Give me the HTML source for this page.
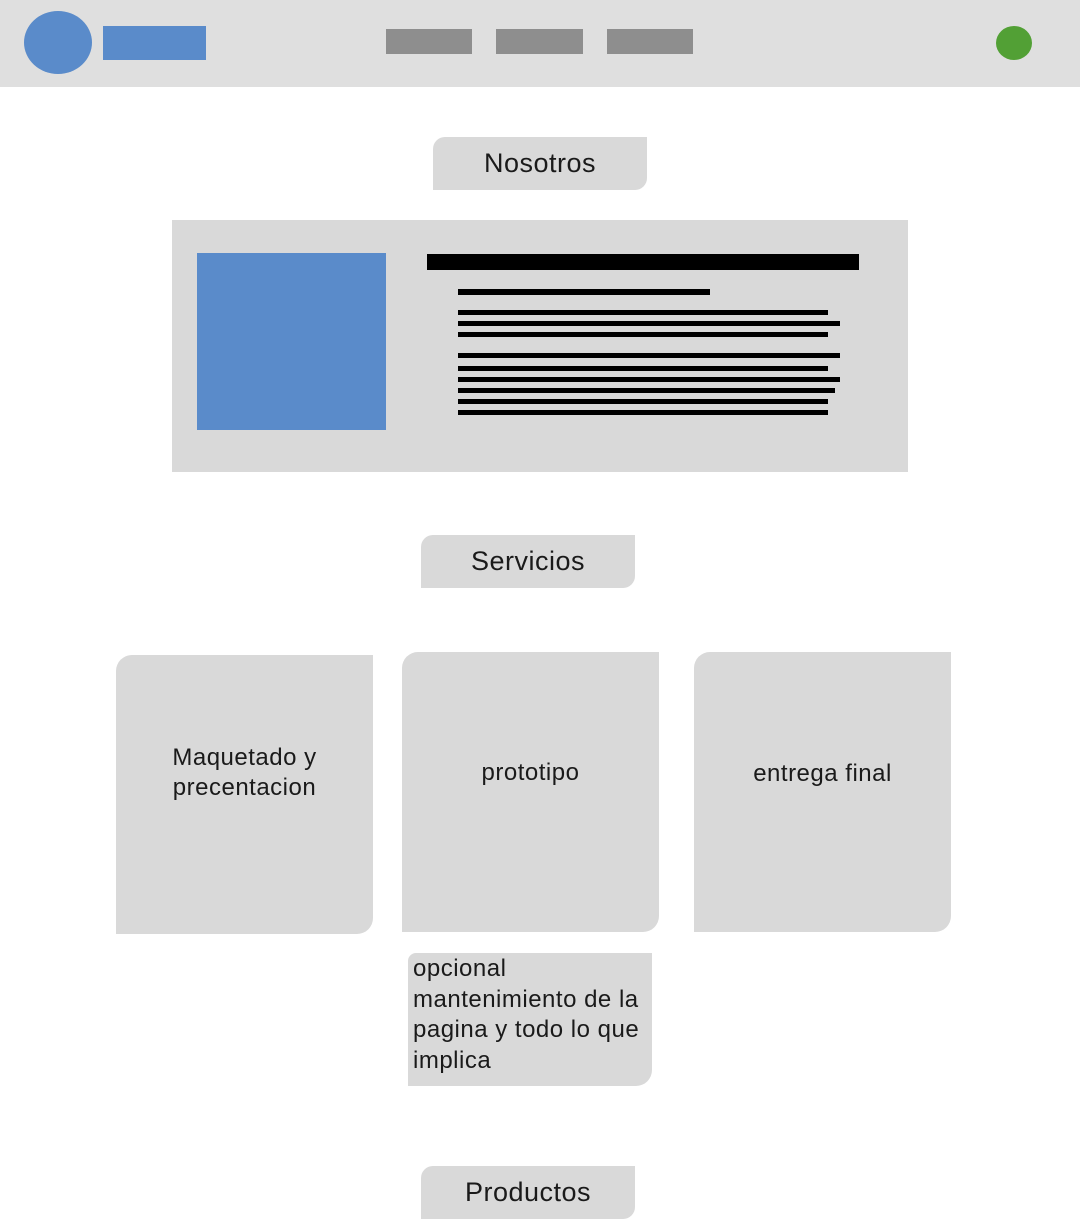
<!DOCTYPE html>
<html><head><meta charset="utf-8"><style>
body{margin:0;width:1080px;height:1227px;background:#fff;position:relative;overflow:hidden;font-family:"Liberation Sans",sans-serif;color:#1a1a1a}
.a{position:absolute}
.g{background:#d9d9d9}
.pill{position:absolute;background:#d9d9d9;border-radius:12px 0 12px 0;font-size:27px;display:flex;align-items:center;justify-content:center;letter-spacing:0.5px}
.card{position:absolute;background:#d9d9d9;border-radius:16px 0 16px 0;font-size:24px;text-align:center;line-height:30px;letter-spacing:0.5px}
.l{position:absolute;background:#000;height:5px}
</style></head><body>
<div class="a" style="left:0;top:0;width:1080px;height:87px;background:#dfdfdf"></div>
<div class="a" style="left:24px;top:11px;width:68px;height:63px;border-radius:50%;background:#5a8bca"></div>
<div class="a" style="left:103px;top:26px;width:103px;height:34px;background:#5a8bca"></div>
<div class="a" style="left:386px;top:29px;width:86px;height:25px;background:#8e8e8e"></div>
<div class="a" style="left:496px;top:29px;width:87px;height:25px;background:#8e8e8e"></div>
<div class="a" style="left:607px;top:29px;width:86px;height:25px;background:#8e8e8e"></div>
<div class="a" style="left:996px;top:26px;width:36px;height:34px;border-radius:50%;background:#52a035"></div>

<div class="pill" style="left:433px;top:137px;width:214px;height:53px">Nosotros</div>
<div class="a g" style="left:172px;top:220px;width:736px;height:252px"></div>
<div class="a" style="left:197px;top:253px;width:189px;height:177px;background:#5a8bca"></div>
<div class="l" style="left:427px;top:254px;width:432px;height:16px"></div>
<div class="l" style="left:458px;top:289px;width:252px;height:6px"></div>
<div class="l" style="left:458px;top:310px;width:370px"></div>
<div class="l" style="left:458px;top:321px;width:382px"></div>
<div class="l" style="left:458px;top:332px;width:370px"></div>
<div class="l" style="left:458px;top:353px;width:382px"></div>
<div class="l" style="left:458px;top:366px;width:370px"></div>
<div class="l" style="left:458px;top:377px;width:382px"></div>
<div class="l" style="left:458px;top:388px;width:377px"></div>
<div class="l" style="left:458px;top:399px;width:370px"></div>
<div class="l" style="left:458px;top:410px;width:370px"></div>

<div class="pill" style="left:421px;top:535px;width:214px;height:53px">Servicios</div>
<div class="card" style="left:116px;top:655px;width:257px;height:279px"><div style="padding-top:88px">Maquetado y<br>precentacion</div></div>
<div class="card" style="left:402px;top:652px;width:257px;height:280px"><div style="padding-top:106px">prototipo</div></div>
<div class="card" style="left:694px;top:652px;width:257px;height:280px"><div style="padding-top:107px">entrega final</div></div>
<div class="card" style="left:408px;top:953px;width:244px;height:133px;text-align:left;line-height:30.5px;border-radius:8px 0 16px 0"><div style="padding:1px 0 0 5px">opcional<br>mantenimiento de la<br>pagina y todo lo que<br>implica</div></div>

<div class="pill" style="left:421px;top:1166px;width:214px;height:53px">Productos</div>
</body></html>
